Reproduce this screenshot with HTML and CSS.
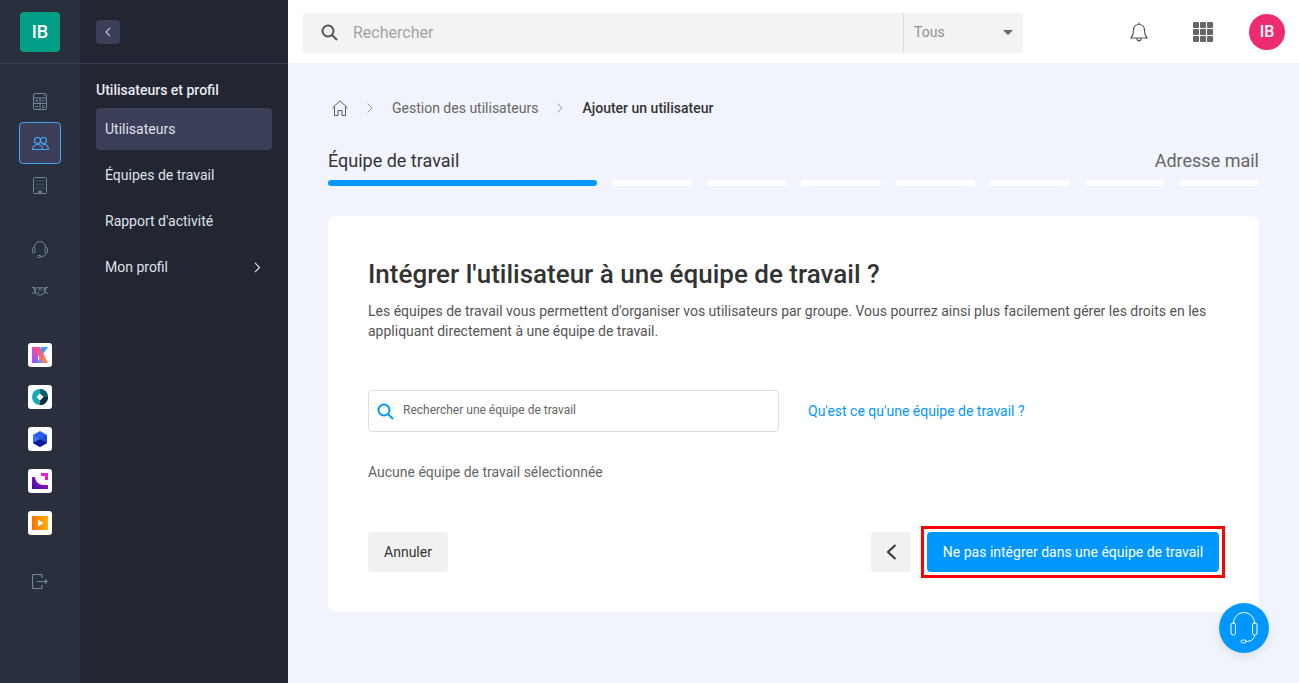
FILE: index.html
```html
<!DOCTYPE html>
<html lang="fr">
<head>
    <meta charset="UTF-8">
    <title>Ajouter un utilisateur</title>
    <link rel="stylesheet" href="styles.css">
</head>
<body>
<div class="app">
    <aside class="rail">
        <div class="rail-top"><div class="logo">IB</div></div>
        <div class="rail-group first">
            <div class="rail-item">
                <svg width="14" height="17" viewBox="0 0 14 17" fill="none" stroke="#71869c"><rect x=".5" y=".5" width="13" height="16" rx="1.500"/><path d="M.5 5h13M.5 10.500h13M7 5v11.500"/><path d="M2.500 7.700h2.500M3.700 6.500v2.400M9 7.700h2.500M2.500 13.500h2.500M9 12.800h2.500M9 14.500h2.500M11 2v1"/></svg>
            </div>
            <div class="rail-item active">
                <svg width="17" height="13" viewBox="0 0 17 13" fill="none" stroke="#42a5f5" stroke-width="1.100"><circle cx="5.500" cy="3.500" r="3"/><circle cx="11.500" cy="3.500" r="3"/><path d="M.6 12.500c0-3 2-5 4.900-5s4.900 2 4.900 5zM10.500 7.600c.3-.1.700-.1 1-.1 2.900 0 4.900 2 4.900 5h-6"/></svg>
            </div>
            <div class="rail-item">
                <svg width="14" height="17" viewBox="0 0 14 17" fill="none" stroke="#71869c"><rect x=".5" y=".5" width="13" height="16" rx="1"/><g fill="#5f7288" stroke="none"><rect x="3.500" y="3" width="1" height="1.500"/><rect x="6.500" y="3" width="1" height="1.500"/><rect x="9.500" y="3" width="1" height="1.500"/><rect x="3.500" y="6.500" width="1" height="1.500"/><rect x="6.500" y="6.500" width="1" height="1.500"/><rect x="9.500" y="6.500" width="1" height="1.500"/><rect x="3.500" y="10" width="1" height="1.500"/><rect x="6.500" y="10" width="1" height="1.500"/><rect x="9.500" y="10" width="1" height="1.500"/><rect x="5" y="13.500" width="4" height="3"/></g></svg>
            </div>
        </div>
        <div class="rail-group">
            <div class="rail-item">
                <svg width="16" height="18" viewBox="0 0 16 18" fill="none" stroke="#71869c"><path d="M2.500 8V7a5.500 5.500 0 0 1 11 0v1"/><rect x=".5" y="7.500" width="2.500" height="5.500" rx="1.200"/><rect x="13" y="7.500" width="2.500" height="5.500" rx="1.200"/><path d="M14 13c0 2.500-1.800 3.500-5 3.500"/><rect x="5.500" y="15.500" width="3.500" height="2" rx="1"/></svg>
            </div>
            <div class="rail-item">
                <svg width="16" height="10" viewBox="0 0 16 10" fill="none" stroke="#71869c"><path d="M0 1.500h3M0 7h3M13 1.500h3M13 7h3M1.800 1.500l1.500 5.500M14.200 1.500L12.700 7"/><path d="M3 2.500l3-1 2 .7 2-.7 3 1-.5 4.500L8 9.500 3.500 7z"/><path d="M6 4l2-1.500 2.500 2.500M5.500 7.500l1.500-2"/></svg>
            </div>
        </div>
        <div class="rail-group">
            <div class="rail-item">
                <div class="app-tile">
                    <svg width="16" height="16" viewBox="0 0 16 16"><defs><linearGradient id="kA" x1="0" y1="0" x2="0" y2="1"><stop offset="0" stop-color="#e44bb5"/><stop offset="1" stop-color="#9a5cf5"/></linearGradient><linearGradient id="kB" x1="0" y1="0" x2="1" y2="1"><stop offset="0" stop-color="#e9459f"/><stop offset="1" stop-color="#ff8a4c"/></linearGradient></defs><path d="M0 0h6v16H0z" fill="url(#kA)"/><path d="M9 0h7l-5 7-3-3z" fill="#3f9cff"/><path d="M5 16l4-7 2 7z" fill="#3f9cff"/><path d="M2 0h6l8 16h-6z" fill="url(#kB)"/></svg>
                </div>
            </div>
            <div class="rail-item">
                <div class="app-tile">
                    <svg width="16" height="16" viewBox="0 0 16 16"><circle cx="8" cy="8" r="8" fill="#16a9b8"/><path d="M8 0a8 8 0 0 1 0 16z" fill="#0e5a6b"/><path d="M16 8a8 8 0 0 1-8 8V8z" fill="#062c3b"/><path d="M8 4.500L11.500 8 8 11.500 4.500 8z" fill="#fff"/></svg>
                </div>
            </div>
            <div class="rail-item">
                <div class="app-tile">
                    <svg width="16" height="16" viewBox="0 0 16 16"><path d="M8 0l7 4v8l-7 4-7-4V4z" fill="#2a5cf0"/><path d="M8 8l7-4v8z" fill="#1f49d8"/><path d="M8 8L1 4v8z" fill="#3a72f5"/><path d="M8 8l7 4-7 4-7-4z" fill="#0a1a96"/></svg>
                </div>
            </div>
            <div class="rail-item">
                <div class="app-tile">
                    <svg width="16" height="16" viewBox="0 0 16 16"><defs><linearGradient id="sA" x1="0" y1="1" x2="1" y2="0"><stop offset="0" stop-color="#2a0fa8"/><stop offset="1" stop-color="#e012b8"/></linearGradient></defs><path d="M0 4h3c.5 4 3 7 7 8h6v4H0z" fill="url(#sA)"/><path d="M9 0h7v7h-3V3H9z" fill="#e81fc4"/></svg>
                </div>
            </div>
            <div class="rail-item">
                <div class="app-tile">
                    <svg width="16" height="14" viewBox="0 0 16 14"><defs><linearGradient id="pA" x1="0" y1="0" x2="1" y2="0"><stop offset="0" stop-color="#ff6a00"/><stop offset="1" stop-color="#ffb300"/></linearGradient></defs><path d="M0 0h16v14H0z" fill="url(#pA)"/><path d="M3 0l9 7-9 7z" fill="#ff8a00"/><path d="M6 3.500L11.500 7 6 10.500z" fill="#fff"/></svg>
                </div>
            </div>
        </div>
        <div class="rail-group exit">
            <div class="rail-item">
                <svg width="16" height="15" viewBox="0 0 16 15" fill="none" stroke="#71869c" stroke-width="1.200"><path d="M10 4V1.500a1 1 0 0 0-1-1H1.500a1 1 0 0 0-1 1v12a1 1 0 0 0 1 1H9a1 1 0 0 0 1-1V11"/><path d="M5 7.500h9.500M13 5.500l2 2-2 2"/></svg>
            </div>
        </div>
    </aside>

    <aside class="side">
        <div class="side-top">
            <div class="collapse">
                <svg width="6" height="10" viewBox="0 0 6 10" fill="none" stroke="#c9ccd8" stroke-width="1.100"><path d="M5 .8L1 5l4 4.200"/></svg>
            </div>
        </div>
        <div class="side-nav">
            <div class="side-title">Utilisateurs et profil</div>
            <div class="side-link current">Utilisateurs</div>
            <div class="side-link">Équipes de travail</div>
            <div class="side-link">Rapport d'activité</div>
            <div class="side-link">Mon profil
                <svg class="side-arrow" width="7" height="11" viewBox="0 0 7 11" fill="none" stroke="#dfe1e8" stroke-width="1.200"><path d="M1 .8l4.500 4.700L1 10.200"/></svg>
            </div>
        </div>
    </aside>

    <div class="page">
        <header class="top">
            <div class="search">
                <svg class="search-ico" width="17" height="17" viewBox="0 0 17 17" fill="none" stroke="#555" stroke-width="2"><circle cx="7" cy="7" r="5.500"/><path d="M11 11l5 5"/></svg>
                <span class="search-text">Rechercher</span>
                <div class="search-scope"><span>Tous</span><i class="caret"></i></div>
            </div>
            <div class="top-icons">
                <svg width="18" height="20" viewBox="0 0 18 20" fill="none" stroke="#555" stroke-width="1.200"><path d="M9 2.500c-3.500 0-5.500 2.500-5.500 6 0 3.500-.8 5.500-2.500 7.500h16c-1.700-2-2.500-4-2.500-7.500 0-3.500-2-6-5.500-6zM9 .5v2M7 16.500c0 1.500 1 2.300 2 2.300s2-.8 2-2.300"/></svg>
                <div class="apps">
                    <i></i><i></i><i></i><i></i><i></i><i></i><i></i><i></i><i></i>
                </div>
                <div class="avatar">IB</div>
            </div>
        </header>

        <main class="main">
            <nav class="crumbs">
                <svg width="16" height="16" viewBox="0 0 16 16" fill="none" stroke="#555" stroke-width="1"><path d="M.5 8L8 .8 15.500 8M2.500 6.500v9h3.500v-5h4v5h3.500v-9"/></svg>
                <svg class="sep" width="6" height="10" viewBox="0 0 6 10" fill="none" stroke="#999"><path d="M.8.800L5 5 .8 9.200"/></svg>
                <span>Gestion des utilisateurs</span>
                <svg class="sep" width="6" height="10" viewBox="0 0 6 10" fill="none" stroke="#999"><path d="M.8.800L5 5 .8 9.200"/></svg>
                <strong>Ajouter un utilisateur</strong>
            </nav>

            <div class="steps-head">
                <span class="step-now">Équipe de travail</span>
                <span class="step-next">Adresse mail</span>
            </div>
            <div class="steps">
                <i class="done"></i><i></i><i></i><i></i><i></i><i></i><i></i><i></i>
            </div>

            <section class="card">
                <h1>Intégrer l'utilisateur à une équipe de travail ?</h1>
                <p class="lead">Les équipes de travail vous permettent d'organiser vos utilisateurs par groupe. Vous pourrez ainsi plus facilement gérer les droits en les appliquant directement à une équipe de travail.</p>

                <div class="team-row">
                    <div class="team-search">
                        <svg width="17" height="17" viewBox="0 0 17 17" fill="none" stroke="#0098ff" stroke-width="2"><circle cx="7" cy="7" r="5.500"/><path d="M11 11l5 5"/></svg>
                        <span>Rechercher une équipe de travail</span>
                    </div>
                    <a class="team-help">Qu'est ce qu'une équipe de travail ?</a>
                </div>

                <p class="none">Aucune équipe de travail sélectionnée</p>

                <div class="actions">
                    <button class="btn grey">Annuler</button>
                    <div class="actions-right">
                        <button class="btn grey back">
                            <svg width="11" height="16" viewBox="0 0 11 16" fill="none" stroke="#333" stroke-width="2"><path d="M9.500 1L2 8l7.500 7"/></svg>
                        </button>
                        <div class="mark">
                            <button class="btn blue">Ne pas intégrer dans une équipe de travail</button>
                        </div>
                    </div>
                </div>
            </section>
        </main>
    </div>

    <div class="fab">
        <svg width="28" height="32" viewBox="0 0 28 32" fill="none" stroke="#fff" stroke-width="1"><path d="M3.500 12V11a10.500 10.500 0 0 1 21 0v1"/><rect x="1" y="11" width="4.500" height="12" rx="2"/><rect x="22.500" y="11" width="4.500" height="12" rx="2"/><path d="M24.500 23c0 4.500-4 6.500-9 6.500"/><rect x="11" y="28" width="5" height="3" rx="1.500"/></svg>
    </div>
</div>
</body>
</html>
```

FILE: styles.css
```css
*{
    margin:0;
    padding:0;
    box-sizing:border-box;
}
html,body{
    height:100%;
    overflow:hidden;
}
body{
    font-family:Roboto,"Liberation Sans",sans-serif;
    font-size:14px;
    color:#333;
    background:#f1f4fc;
}
.app{
    display:flex;
    height:683px;
    position:relative;
}

/* icon rail */
.rail{
    width:80px;
    flex:none;
    background:#2a2f3d;
}
.rail-top{
    height:64px;
    padding:12px 20px 0;
    border-bottom:1px solid #3a3e55;
}
.logo{
    width:40px;
    height:40px;
    border-radius:4px;
    background:#009e87;
    color:#fff;
    font-size:18px;
    font-weight:500;
    line-height:40px;
    text-align:center;
}
.rail-group{
    margin-top:22px;
}
.rail-group.first{
    margin-top:16px;
}
.rail-group.exit{
    margin-top:16px;
}
.rail-item{
    width:42px;
    height:42px;
    margin-left:19px;
    display:flex;
    align-items:center;
    justify-content:center;
    border-radius:4px;
}
.rail-item.active{
    background:#3b3e58;
    border:1px solid #42a5f5;
}
.app-tile{
    width:24px;
    height:24px;
    background:#fff;
    border-radius:3px;
    display:flex;
    align-items:center;
    justify-content:center;
}

/* second column */
.side{
    width:208px;
    flex:none;
    background:#222632;
}
.side-top{
    height:64px;
    padding:20px 16px 0;
    border-bottom:1px solid #3a3e55;
}
.collapse{
    width:24px;
    height:24px;
    border-radius:4px;
    background:#3b3e58;
    display:flex;
    align-items:center;
    justify-content:center;
}
.side-nav{
    padding:16px 16px 0;
}
.side-title{
    color:#e8e9ee;
    font-weight:500;
    line-height:20px;
    margin-bottom:8px;
}
.side-link{
    height:42px;
    margin-bottom:4px;
    padding:0 9px;
    border-radius:4px;
    color:#dfe1e8;
    display:flex;
    align-items:center;
    justify-content:space-between;
}
.side-link.current{
    background:#3b3e58;
}
.side-arrow{
    margin-right:2px;
}

/* header */
.page{
    flex:1;
    min-width:0;
}
.top{
    height:63px;
    background:#fff;
    padding:13px 14px 0 15px;
    display:flex;
    justify-content:space-between;
    align-items:flex-start;
}
.search{
    width:720px;
    height:40px;
    background:#f3f3f3;
    border-radius:4px;
    display:flex;
    align-items:center;
    padding-left:18px;
    box-shadow:0 0 2px rgba(0,0,0,.06);
}
.search-ico{
    margin-bottom:2px;
}
.search-text{
    margin-left:15px;
    margin-bottom:2px;
    font-size:16px;
    color:#a3a3a3;
    flex:1;
}
.search-scope{
    width:120px;
    height:40px;
    border-left:1px solid #ddd;
    padding:0 10px 2px;
    color:#8f8f8f;
    display:flex;
    align-items:center;
    justify-content:space-between;
}
.caret{
    width:0;
    height:0;
    border-left:5px solid transparent;
    border-right:5px solid transparent;
    border-top:5px solid #666;
}
.top-icons{
    display:flex;
    align-items:center;
    height:38px;
}
.apps{
    display:grid;
    grid-template-columns:repeat(3,6px);
    gap:1px;
    margin:0 36px 0 45px;
}
.apps i{
    height:6px;
    background:#666;
    border-radius:1px;
}
.avatar{
    width:36px;
    height:36px;
    border-radius:50%;
    background:#ef2b70;
    color:#fff;
    font-size:16px;
    font-weight:500;
    line-height:36px;
    text-align:center;
}

/* content */
.main{
    padding:36px 40px 0;
}
.crumbs{
    display:flex;
    align-items:center;
    height:18px;
    margin-left:4px;
    color:#666;
}
.crumbs .sep{
    margin:0 19px 0 19px;
}
.crumbs strong{
    font-weight:500;
    color:#333;
}
.steps-head{
    display:flex;
    justify-content:space-between;
    margin-top:32px;
    font-size:18px;
    line-height:24px;
}
.step-next{
    color:#666;
}
.steps{
    display:grid;
    grid-template-columns:269px repeat(7,1fr);
    gap:15px;
    margin-top:7px;
}
.steps i{
    height:6px;
    border-radius:3px;
    background:#fff;
}
.steps i.done{
    background:#0098ff;
}
.card{
    margin-top:30px;
    height:396px;
    background:#fff;
    border-radius:8px;
    padding:40px;
}
.card h1{
    font-size:26px;
    font-weight:500;
    line-height:36px;
}
.lead{
    margin-top:9px;
    line-height:20px;
    color:#555;
}
.team-row{
    display:flex;
    align-items:center;
    margin-top:49px;
}
.team-search{
    width:411px;
    height:42px;
    border:1px solid #ddd;
    border-radius:4px;
    display:flex;
    align-items:center;
    padding-left:8px;
    font-size:12px;
    color:#666;
}
.team-search span{
    margin-left:9px;
    margin-bottom:2px;
}
.team-help{
    margin-left:29px;
    color:#0098ff;
}
.none{
    margin-top:30px;
    line-height:20px;
    color:#666;
}
.actions{
    display:flex;
    justify-content:space-between;
    margin-top:50px;
}
.actions-right{
    display:flex;
    align-items:center;
    margin-right:-6px;
}
.btn{
    height:40px;
    border:0;
    border-radius:4px;
    font-family:inherit;
    font-size:14px;
}
.grey{
    width:80px;
    background:#f1f1f1;
    color:#333;
}
.back{
    width:40px;
    display:flex;
    align-items:center;
    justify-content:center;
    margin-right:10px;
}
.mark{
    border:3px solid #f00;
    padding:3px;
    margin:-6px 0;
}
.blue{
    display:block;
    width:292px;
    background:#0098ff;
    color:#fff;
}
.fab{
    position:absolute;
    left:1219px;
    top:603px;
    width:50px;
    height:50px;
    border-radius:50%;
    background:#0098ff;
    box-shadow:0 4px 12px rgba(0,0,0,.08);
    display:flex;
    align-items:center;
    justify-content:center;
}
```
